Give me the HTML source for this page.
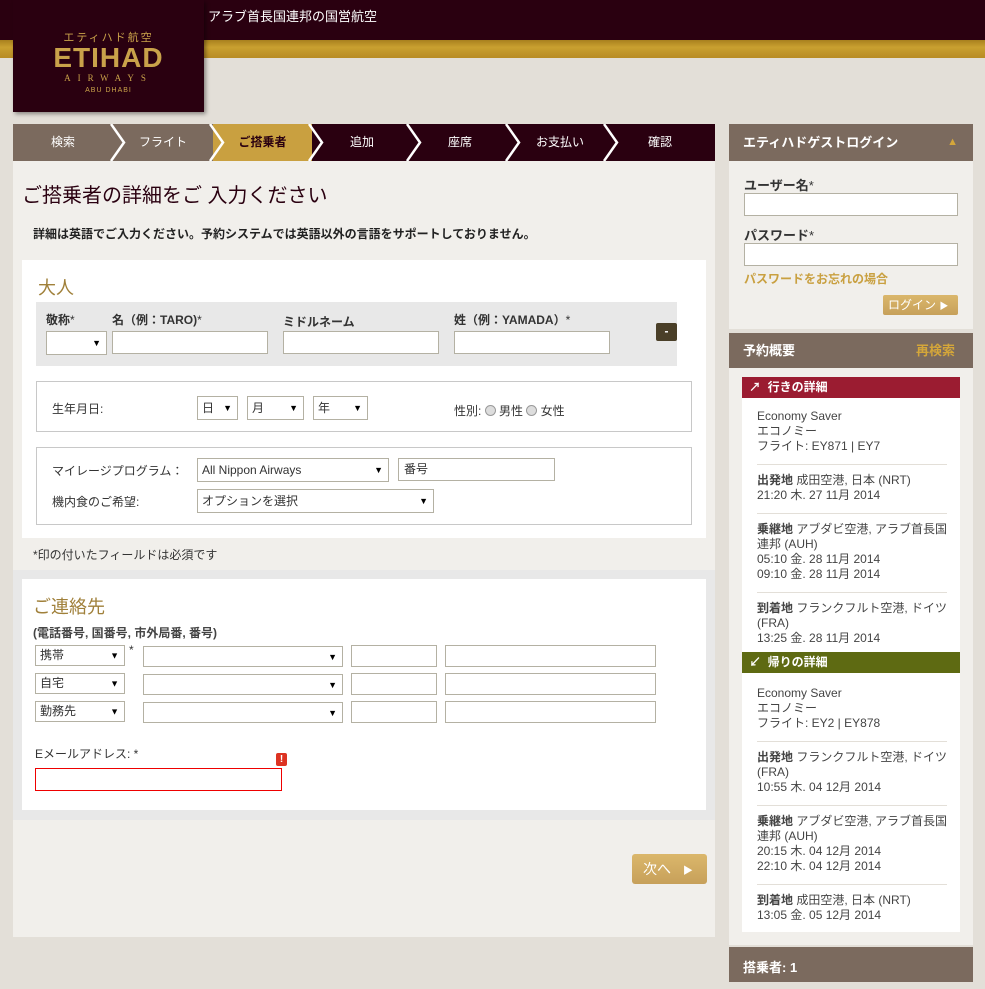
<!DOCTYPE html><html><head><meta charset="utf-8"><style>
*{margin:0;padding:0;box-sizing:border-box}
body{width:985px;height:982px;overflow:hidden;background:#e3dfd8;font-family:"Liberation Sans","Noto Sans CJK JP",sans-serif;font-size:12px;color:#333;position:relative}
.a{position:absolute}
.top{left:0;top:0;width:985px;height:40px;background:#2a0010}
.gold{left:0;top:40px;width:985px;height:18px;background:linear-gradient(#a8801e,#c9a030 40%,#b88c25)}
.logo{left:13px;top:0;width:191px;height:112px;background:#2a0010;box-shadow:2px 2px 4px rgba(0,0,0,.4);color:#c9a24a;text-align:center}
.nav{top:124px;height:37px;color:#fff;font-size:12px;line-height:37px;text-align:center}
.inp{position:absolute;background:#fff;border:1px solid #b4b1a3}
.sel:after{content:"▼";position:absolute;right:5px;top:50%;transform:translateY(-50%);font-size:9px;color:#000}
.sel{font-size:12px;color:#333;padding-left:4px}
.st{color:#333}
.sb{left:742px;width:218px;font-size:12px;color:#444;line-height:15px;padding-left:15px}
.hr{position:absolute;left:757px;width:190px;height:1px;background:#e3dfd8}
</style></head><body>
<div class="a top"></div><div class="a gold"></div>
<div class="a" style="left:208px;top:6px;color:#fff;font-size:13px">アラブ首長国連邦の国営航空</div>
<div class="a logo">
<div style="margin-top:29px;font-size:11px;letter-spacing:2px">エティハド航空</div>
<div style="font-size:28px;font-weight:bold;line-height:26px;letter-spacing:1px">ETIHAD</div>
<div style="font-family:'Liberation Serif',serif;font-size:9px;letter-spacing:7px;margin-top:2px">AIRWAYS</div>
<div style="font-size:7px;letter-spacing:1px;margin-top:4px">ABU DHABI</div>
</div>
<!-- nav -->
<div class="a" style="left:13px;top:124px;width:702px;height:37px;background:#2a0010"></div>
<div class="a nav" style="left:13px;width:100px;background:#7b6a5e">検索</div>
<div class="a nav" style="left:113px;width:100px;background:#7b6a5e">フライト</div>
<div class="a nav" style="left:213px;width:99px;background:#c9a040;color:#2a0010;font-weight:bold">ご搭乗者</div>
<div class="a nav" style="left:312px;width:100px">追加</div>
<div class="a nav" style="left:410px;width:100px">座席</div>
<div class="a nav" style="left:510px;width:100px">お支払い</div>
<div class="a nav" style="left:610px;width:100px">確認</div>
<svg class="a" style="left:13px;top:124px" width="702" height="37"><g fill="none" stroke="#fff" stroke-width="2.5"><path d="M98 0L111 18.5L98 37M197 0L210 18.5L197 37M296 0L309 18.5L296 37M394 0L407 18.5L394 37M493 0L506 18.5L493 37M591 0L604 18.5L591 37"/></g></svg>
<!-- main -->
<div class="a" style="left:13px;top:161px;width:702px;height:776px;background:#f1efeb"></div>
<div class="a" style="left:22px;top:179px;font-size:20px;color:#2a0010">ご搭乗者の詳細をご 入力ください</div>
<div class="a" style="left:33px;top:225px;font-size:12px;font-weight:bold;color:#222">詳細は英語でご入力ください。予約システムでは英語以外の言語をサポートしておりません。</div>
<div class="a" style="left:22px;top:260px;width:684px;height:278px;background:#fff"></div>
<div class="a" style="left:38px;top:274px;font-size:18px;color:#a0803a">大人</div>
<div class="a" style="left:36px;top:302px;width:641px;height:64px;background:#e8e8e8"></div>
<div class="a" style="left:46px;top:311px;font-weight:bold">敬称<span style="font-weight:normal">*</span></div>
<div class="a" style="left:112px;top:311px;font-weight:bold">名（例：TARO)<span style="font-weight:normal">*</span></div>
<div class="a" style="left:283px;top:313px;font-weight:bold">ミドルネーム</div>
<div class="a" style="left:454px;top:311px;font-weight:bold">姓（例：YAMADA）<span style="font-weight:normal">*</span></div>
<div class="inp sel" style="left:46px;top:331px;width:61px;height:24px"></div>
<div class="inp" style="left:112px;top:331px;width:156px;height:23px"></div>
<div class="inp" style="left:283px;top:331px;width:156px;height:23px"></div>
<div class="inp" style="left:454px;top:331px;width:156px;height:23px"></div>
<div class="a" style="left:656px;top:323px;width:21px;height:18px;background:#4a3f28;border-radius:2px;color:#fff;text-align:center;line-height:17px;font-weight:bold">-</div>
<div class="a" style="left:36px;top:381px;width:656px;height:51px;border:1px solid #c8c8c8"></div>
<div class="a" style="left:52px;top:400px">生年月日:</div>
<div class="inp sel" style="left:197px;top:396px;width:41px;height:24px;line-height:22px">日</div>
<div class="inp sel" style="left:247px;top:396px;width:57px;height:24px;line-height:22px">月</div>
<div class="inp sel" style="left:313px;top:396px;width:55px;height:24px;line-height:22px">年</div>
<div class="a" style="left:454px;top:402px">性別: <span style="display:inline-block;width:11px;height:11px;border-radius:50%;border:1px solid #999;background:#ddd;vertical-align:-1px"></span> 男性 <span style="display:inline-block;width:11px;height:11px;border-radius:50%;border:1px solid #999;background:#ddd;vertical-align:-1px"></span> 女性</div>
<div class="a" style="left:36px;top:447px;width:656px;height:78px;border:1px solid #c8c8c8"></div>
<div class="a" style="left:52px;top:462px">マイレージプログラム：</div>
<div class="inp sel" style="left:197px;top:458px;width:192px;height:24px;line-height:22px">All Nippon Airways</div>
<div class="inp" style="left:398px;top:458px;width:157px;height:23px;padding-left:5px;line-height:21px">番号</div>
<div class="a" style="left:52px;top:493px">機内食のご希望:</div>
<div class="inp sel" style="left:197px;top:489px;width:237px;height:24px;line-height:22px">オプションを選択</div>
<div class="a" style="left:33px;top:546px;font-size:12px">*印の付いたフィールドは必須です</div>
<div class="a" style="left:13px;top:570px;width:702px;height:250px;background:#e8e8e8"></div>
<div class="a" style="left:22px;top:579px;width:684px;height:231px;background:#fff"></div>
<div class="a" style="left:33px;top:593px;font-size:18px;color:#a0803a">ご連絡先</div>
<div class="a" style="left:33px;top:624px;font-weight:bold;color:#444">(電話番号, 国番号, 市外局番, 番号)</div>
<div class="a" style="left:129px;top:643px">*</div>
<div class="inp sel" style="left:35px;top:645px;width:90px;height:21px;line-height:19px">携帯</div>
<div class="inp sel" style="left:35px;top:673px;width:90px;height:21px;line-height:19px">自宅</div>
<div class="inp sel" style="left:35px;top:701px;width:90px;height:21px;line-height:19px">勤務先</div>
<div class="inp sel" style="left:143px;top:646px;width:200px;height:21px"></div>
<div class="inp sel" style="left:143px;top:674px;width:200px;height:21px"></div>
<div class="inp sel" style="left:143px;top:702px;width:200px;height:21px"></div>
<div class="inp" style="left:351px;top:645px;width:86px;height:22px"></div>
<div class="inp" style="left:351px;top:673px;width:86px;height:22px"></div>
<div class="inp" style="left:351px;top:701px;width:86px;height:22px"></div>
<div class="inp" style="left:445px;top:645px;width:211px;height:22px"></div>
<div class="inp" style="left:445px;top:673px;width:211px;height:22px"></div>
<div class="inp" style="left:445px;top:701px;width:211px;height:22px"></div>
<div class="a" style="left:35px;top:745px">Eメールアドレス: *</div>
<div class="a" style="left:35px;top:768px;width:247px;height:23px;border:1px solid #e00;background:#fff"></div>
<div class="a" style="left:276px;top:753px;width:11px;height:13px;background:#d32;border-radius:2px;color:#fff;font-size:10px;font-weight:bold;text-align:center;line-height:13px">!</div>
<div class="a" style="left:632px;top:854px;width:75px;height:30px;background:linear-gradient(#dbb76b,#c7a05a);border-radius:3px;color:#fff;font-size:14px;line-height:30px;padding-left:11px">次へ <span style="font-size:10px;margin-left:8px">▶</span></div>
<!-- sidebar -->
<div class="a" style="left:729px;top:124px;width:244px;height:37px;background:#7b6a5e;color:#fff;font-weight:bold;font-size:13px;line-height:37px;padding-left:14px">エティハドゲストログイン<span style="position:absolute;right:15px;color:#d4a63a;font-size:11px">▲</span></div>
<div class="a" style="left:729px;top:161px;width:244px;height:168px;background:#f1efeb"></div>
<div class="a" style="left:744px;top:175px;font-weight:bold;font-size:13px">ユーザー名<span style="font-weight:normal">*</span></div>
<div class="inp" style="left:744px;top:193px;width:214px;height:23px"></div>
<div class="a" style="left:744px;top:225px;font-weight:bold;font-size:13px">パスワード<span style="font-weight:normal">*</span></div>
<div class="inp" style="left:744px;top:243px;width:214px;height:23px"></div>
<div class="a" style="left:744px;top:270px;font-weight:bold;color:#c9a040">パスワードをお忘れの場合</div>
<div class="a" style="left:883px;top:295px;width:75px;height:20px;background:linear-gradient(#dbb76b,#c7a05a);border-radius:2px;color:#fff;line-height:20px;padding-left:5px">ログイン <span style="font-size:9px">▶</span></div>
<div class="a" style="left:729px;top:333px;width:244px;height:35px;background:#7b6a5e;color:#fff;font-weight:bold;font-size:13px;line-height:35px;padding-left:14px">予約概要<span style="position:absolute;right:18px;color:#d4a63a">再検索</span></div>
<div class="a" style="left:729px;top:368px;width:244px;height:577px;background:#f1efeb"></div>
<div class="a" style="left:742px;top:377px;width:218px;height:555px;background:#fff"></div>
<div class="a" style="left:742px;top:377px;width:218px;height:21px;background:#9b1c31;color:#fff;font-weight:bold;line-height:21px;padding-left:7px">↗&nbsp; 行きの詳細</div>
<div class="a sb" style="top:409px">Economy Saver<br>エコノミー<br>フライト: EY871 | EY7</div>
<div class="hr" style="top:464px"></div>
<div class="a sb" style="top:473px"><b>出発地</b> 成田空港, 日本 (NRT)<br>21:20 木. 27 11月 2014</div>
<div class="hr" style="top:513px"></div>
<div class="a sb" style="top:522px"><b>乗継地</b> アブダビ空港, アラブ首長国<br>連邦 (AUH)<br>05:10 金. 28 11月 2014<br>09:10 金. 28 11月 2014</div>
<div class="hr" style="top:592px"></div>
<div class="a sb" style="top:601px"><b>到着地</b> フランクフルト空港, ドイツ<br>(FRA)<br>13:25 金. 28 11月 2014</div>
<div class="a" style="left:742px;top:652px;width:218px;height:21px;background:#5e6a12;color:#fff;font-weight:bold;line-height:21px;padding-left:7px">↙&nbsp; 帰りの詳細</div>
<div class="a sb" style="top:686px">Economy Saver<br>エコノミー<br>フライト: EY2 | EY878</div>
<div class="hr" style="top:741px"></div>
<div class="a sb" style="top:750px"><b>出発地</b> フランクフルト空港, ドイツ<br>(FRA)<br>10:55 木. 04 12月 2014</div>
<div class="hr" style="top:805px"></div>
<div class="a sb" style="top:814px"><b>乗継地</b> アブダビ空港, アラブ首長国<br>連邦 (AUH)<br>20:15 木. 04 12月 2014<br>22:10 木. 04 12月 2014</div>
<div class="hr" style="top:884px"></div>
<div class="a sb" style="top:893px"><b>到着地</b> 成田空港, 日本 (NRT)<br>13:05 金. 05 12月 2014</div>
<div class="a" style="left:729px;top:947px;width:244px;height:35px;background:#7b6a5e;color:#fff;font-weight:bold;font-size:13px;line-height:42px;padding-left:14px">搭乗者: 1</div>
</body></html>
